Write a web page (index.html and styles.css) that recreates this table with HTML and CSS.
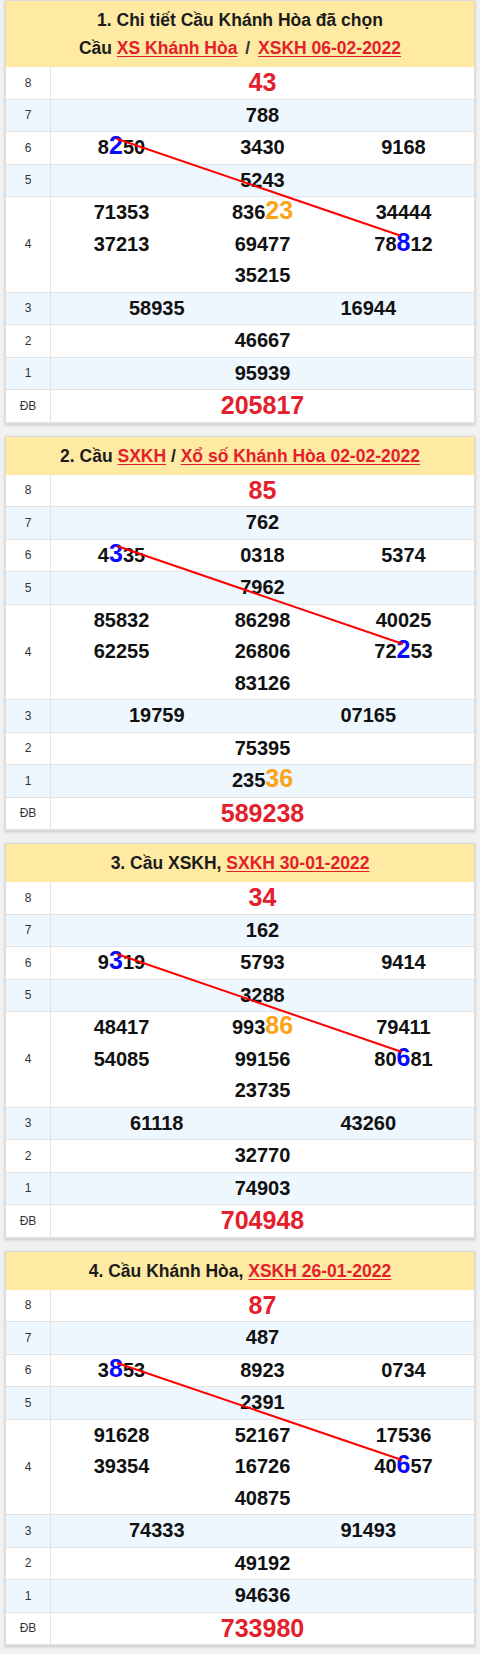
FILE: index.html
```html
<!DOCTYPE html>
<html lang="vi">
<head>
<meta charset="utf-8">
<title>Cầu Khánh Hòa</title>
<link rel="stylesheet" href="styles.css">
</head>
<body>

<section class="card">
  <header class="card-head">
    <div>1. Chi tiết Cầu Khánh Hòa đã chọn</div>
    <div>Cầu <a class="lnk" href="#">XS Khánh Hòa</a> <span class="sep">/</span> <a class="lnk" href="#">XSKH 06-02-2022</a></div>
  </header>
  <div class="board">
    <div class="row"><div class="lbl">8</div><div class="nums c1"><div class="big">43</div></div></div>
    <div class="row alt"><div class="lbl">7</div><div class="nums c1"><div>788</div></div></div>
    <div class="row"><div class="lbl">6</div><div class="nums c3"><div>8<span class="hb">2</span>50</div><div>3430</div><div>9168</div></div></div>
    <div class="row alt"><div class="lbl">5</div><div class="nums c1"><div>5243</div></div></div>
    <div class="row"><div class="lbl">4</div><div class="nums c3"><div>71353</div><div>836<span class="ho">23</span></div><div>34444</div><div>37213</div><div>69477</div><div>78<span class="hb">8</span>12</div><div class="mid">35215</div></div></div>
    <div class="row alt"><div class="lbl">3</div><div class="nums c2"><div>58935</div><div>16944</div></div></div>
    <div class="row"><div class="lbl">2</div><div class="nums c1"><div>46667</div></div></div>
    <div class="row alt"><div class="lbl">1</div><div class="nums c1"><div>95939</div></div></div>
    <div class="row"><div class="lbl">ĐB</div><div class="nums c1"><div class="big">205817</div></div></div>
    <svg class="cau" xmlns="http://www.w3.org/2000/svg"><line x1="110" y1="71.5" x2="394" y2="168.5"/></svg>
  </div>
</section>

<section class="card">
  <header class="card-head">
    <div>2. Cầu <a class="lnk" href="#">SXKH</a> / <a class="lnk" href="#">Xổ số Khánh Hòa 02-02-2022</a></div>
  </header>
  <div class="board">
    <div class="row"><div class="lbl">8</div><div class="nums c1"><div class="big">85</div></div></div>
    <div class="row alt"><div class="lbl">7</div><div class="nums c1"><div>762</div></div></div>
    <div class="row"><div class="lbl">6</div><div class="nums c3"><div>4<span class="hb">3</span>35</div><div>0318</div><div>5374</div></div></div>
    <div class="row alt"><div class="lbl">5</div><div class="nums c1"><div>7962</div></div></div>
    <div class="row"><div class="lbl">4</div><div class="nums c3"><div>85832</div><div>86298</div><div>40025</div><div>62255</div><div>26806</div><div>72<span class="hb">2</span>53</div><div class="mid">83126</div></div></div>
    <div class="row alt"><div class="lbl">3</div><div class="nums c2"><div>19759</div><div>07165</div></div></div>
    <div class="row"><div class="lbl">2</div><div class="nums c1"><div>75395</div></div></div>
    <div class="row alt"><div class="lbl">1</div><div class="nums c1"><div>235<span class="ho">36</span></div></div></div>
    <div class="row"><div class="lbl">ĐB</div><div class="nums c1"><div class="big">589238</div></div></div>
    <svg class="cau" xmlns="http://www.w3.org/2000/svg"><line x1="111" y1="71" x2="397" y2="169"/></svg>
  </div>
</section>

<section class="card">
  <header class="card-head">
    <div>3. Cầu XSKH, <a class="lnk" href="#">SXKH 30-01-2022</a></div>
  </header>
  <div class="board">
    <div class="row"><div class="lbl">8</div><div class="nums c1"><div class="big">34</div></div></div>
    <div class="row alt"><div class="lbl">7</div><div class="nums c1"><div>162</div></div></div>
    <div class="row"><div class="lbl">6</div><div class="nums c3"><div>9<span class="hb">3</span>19</div><div>5793</div><div>9414</div></div></div>
    <div class="row alt"><div class="lbl">5</div><div class="nums c1"><div>3288</div></div></div>
    <div class="row"><div class="lbl">4</div><div class="nums c3"><div>48417</div><div>993<span class="ho">86</span></div><div>79411</div><div>54085</div><div>99156</div><div>80<span class="hb">6</span>81</div><div class="mid">23735</div></div></div>
    <div class="row alt"><div class="lbl">3</div><div class="nums c2"><div>61118</div><div>43260</div></div></div>
    <div class="row"><div class="lbl">2</div><div class="nums c1"><div>32770</div></div></div>
    <div class="row alt"><div class="lbl">1</div><div class="nums c1"><div>74903</div></div></div>
    <div class="row"><div class="lbl">ĐB</div><div class="nums c1"><div class="big">704948</div></div></div>
    <svg class="cau" xmlns="http://www.w3.org/2000/svg"><line x1="111" y1="72" x2="396" y2="170"/></svg>
  </div>
</section>

<section class="card">
  <header class="card-head">
    <div>4. Cầu Khánh Hòa, <a class="lnk" href="#">XSKH 26-01-2022</a></div>
  </header>
  <div class="board">
    <div class="row"><div class="lbl">8</div><div class="nums c1"><div class="big">87</div></div></div>
    <div class="row alt"><div class="lbl">7</div><div class="nums c1"><div>487</div></div></div>
    <div class="row"><div class="lbl">6</div><div class="nums c3"><div>3<span class="hb">8</span>53</div><div>8923</div><div>0734</div></div></div>
    <div class="row alt"><div class="lbl">5</div><div class="nums c1"><div>2391</div></div></div>
    <div class="row"><div class="lbl">4</div><div class="nums c3"><div>91628</div><div>52167</div><div>17536</div><div>39354</div><div>16726</div><div>40<span class="hb">6</span>57</div><div class="mid">40875</div></div></div>
    <div class="row alt"><div class="lbl">3</div><div class="nums c2"><div>74333</div><div>91493</div></div></div>
    <div class="row"><div class="lbl">2</div><div class="nums c1"><div>49192</div></div></div>
    <div class="row alt"><div class="lbl">1</div><div class="nums c1"><div>94636</div></div></div>
    <div class="row"><div class="lbl">ĐB</div><div class="nums c1"><div class="big">733980</div></div></div>
    <svg class="cau" xmlns="http://www.w3.org/2000/svg"><line x1="111" y1="73" x2="396" y2="170"/></svg>
  </div>
</section>

</body>
</html>
```

FILE: styles.css
```css
html, body {
  margin: 0;
  padding: 0;
}

body {
  background: #f1f1f1;
  padding: 0 5px 5px;
  font-family: "Liberation Sans", Arial, sans-serif;
  color: #111;
}

.card {
  background: #fff;
  border: 1px solid #dadada;
  box-shadow: 0 1px 3px rgba(0, 0, 0, 0.18);
  margin-bottom: 12px;
}

.card:last-child {
  margin-bottom: 0;
}

.card-head {
  background: #feeaa3;
  text-align: center;
  font-weight: bold;
  font-size: 17.5px;
  line-height: 28px;
  padding: 5px 4px;
  color: #1b1b1b;
}

.lnk {
  color: #e3202b;
  text-decoration: underline;
  text-underline-offset: 2px;
}

.sep {
  margin: 0 3px;
  color: #333;
}

.board {
  position: relative;
}

.row {
  display: grid;
  grid-template-columns: 45px 1fr;
  border-bottom: 1px solid #e2e2e2;
  background: #fff;
}

.row.alt {
  background: #eef6fe;
}

.lbl {
  display: flex;
  align-items: center;
  justify-content: center;
  border-right: 1px solid #e2e2e2;
  font-size: 12px;
  color: #333;
}

.nums {
  display: grid;
  text-align: center;
  font-weight: bold;
  font-size: 20px;
  line-height: 31.5px;
  color: #111;
}

.nums.c1 { grid-template-columns: 1fr; }
.nums.c2 { grid-template-columns: repeat(2, 1fr); }
.nums.c3 { grid-template-columns: repeat(3, 1fr); }

.mid {
  grid-column: 2;
}

.hb,
.ho {
  font-size: 25px;
  line-height: 20px;
}

.hb { color: #0a0aff; }
.ho { color: #fba418; }

.big {
  font-size: 25px;
  color: #e3202b;
}

.cau {
  position: absolute;
  left: 0;
  top: 0;
  width: 100%;
  height: 100%;
  pointer-events: none;
  overflow: visible;
}

.cau line {
  stroke: #ff0000;
  stroke-width: 2;
}
```
